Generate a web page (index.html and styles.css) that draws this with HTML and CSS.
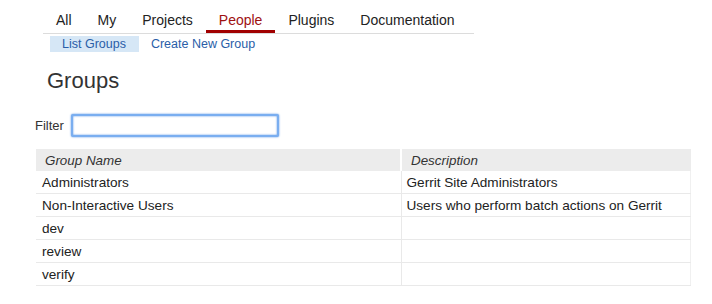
FILE: index.html
```html
<!DOCTYPE html>
<html lang="en">
  <head>
    <meta charset="UTF-8" />
    <title>Groups - Gerrit</title>
    <link rel="stylesheet" href="styles.css">
  </head>
  <body>
    <ul class="topnav">
      <li>All</li>
      <li>My</li>
      <li>Projects</li>
      <li class="active">People</li>
      <li>Plugins</li>
      <li>Documentation</li>
    </ul>
    <ul class="subnav">
      <li class="selected">List Groups</li>
      <li>Create New Group</li>
    </ul>

    <h1 class="title">Groups</h1>

    <div class="filter">
      <label for="filter">Filter</label>
      <input id="filter" type="text" />
    </div>

    <table class="groups">
      <thead>
        <tr>
          <th class="name">Group Name</th>
          <th>Description</th>
        </tr>
      </thead>
      <tbody>
        <tr><td>Administrators</td><td>Gerrit Site Administrators</td></tr>
        <tr><td>Non-Interactive Users</td><td>Users who perform batch actions on Gerrit</td></tr>
        <tr><td>dev</td><td></td></tr>
        <tr><td>review</td><td></td></tr>
        <tr><td>verify</td><td></td></tr>
      </tbody>
    </table>
  </body>
</html>
```

FILE: styles.css
```css
body {
  font-family: "Liberation Sans", Arial, sans-serif;
  background-color: #fff;
  color: #222;
  margin: 0;
  padding: 0;
}
ul {
  list-style: none;
  margin: 0;
  padding: 0;
}
.topnav {
  display: flex;
  width: 431px;
  margin-left: 43px;
  padding-top: 12px;
  border-bottom: 1px solid #dcdcdc;
  font-size: 14px;
  line-height: 17px;
}
.topnav li {
  padding: 0 13px 1px;
  border-bottom: 3px solid transparent;
  color: #222;
}
.topnav li.active {
  color: #9e1111;
  border-bottom-color: #a10000;
}
.subnav {
  display: flex;
  margin: 2px 0 0 50px;
  font-size: 12.5px;
  line-height: 16px;
  color: #2a5ea8;
}
.subnav li {
  padding: 0 13px 0 12px;
}
.subnav li.selected {
  background-color: #d6e7f6;
}
.title {
  margin: 16px 0 0 47px;
  font-size: 22px;
  line-height: 26px;
  font-weight: normal;
  color: #333;
}
.filter {
  display: flex;
  align-items: center;
  margin: 20px 0 0 35px;
  font-size: 13px;
  color: #333;
}
.filter input {
  box-sizing: border-box;
  width: 208px;
  height: 23px;
  margin-left: 7px;
  border: 2px solid #7aaef0;
  border-radius: 2px;
  box-shadow: inset 0 0 2px #4f8fe3, 0 0 2px #4f8fe3;
  outline: none;
}
table {
  width: 655px;
  margin: 12px 0 0 36px;
  border-collapse: collapse;
  font-size: 13.6px;
}
th {
  height: 22px;
  padding: 0 0 0 9px;
  text-align: left;
  font-weight: normal;
  font-style: italic;
  font-size: 13.4px;
  color: #333;
  background-color: #ececec;
}
th.name {
  width: 355px;
}
th + th {
  border-left: 2px solid #fff;
}
td {
  height: 22px;
  padding: 0 0 0 6px;
  border-bottom: 1px solid #e9e9e9;
  color: #222;
}
td + td {
  border-left: 1px solid #e9e9e9;
  border-right: 1px solid #f0f0f0;
  padding-left: 5px;
}
```
